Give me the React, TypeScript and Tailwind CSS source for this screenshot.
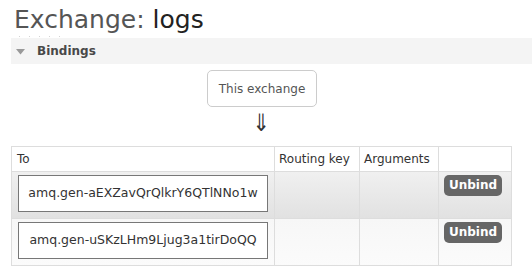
import React from 'react'

const bindings = [
  { to: 'amq.gen-aEXZavQrQlkrY6QTlNNo1w', alt: 'bg-linear-to-b from-[#f0f0f0] to-[#e1e1e1]' },
  { to: 'amq.gen-uSKzLHm9Ljug3a1tirDoQQ', alt: 'bg-linear-to-b from-[#f7f7f7] to-[#fbfbfb]' },
]

export default function App() {
  return (
    <div className="w-[532px] h-[273px] overflow-hidden bg-white pl-[11px] font-['DejaVu_Sans',Verdana,sans-serif] text-[#444]">
      <h1 className="pl-[3px] pt-[5px] h-[36px] text-[25px] leading-[30px] text-[#555] whitespace-nowrap">
        Exchange: <span className="text-[#222]">logs</span>
      </h1>

      <div className="flex gap-[9px] pl-[8px] h-[2px] items-start">
        <span className="w-[1px] h-[1px] bg-[#d4d4d4]"></span>
        <span className="w-[1px] h-[1px] bg-[#d4d4d4]"></span>
        <span className="w-[1px] h-[1px] bg-[#d4d4d4]"></span>
        <span className="w-[1px] h-[1px] bg-[#d4d4d4]"></span>
        <span className="w-[1px] h-[1px] bg-[#d4d4d4]"></span>
      </div>

      <div className="flex items-center h-[26px] bg-[#f4f4f4] pl-[5px] text-[12px] font-bold text-[#484848]">
        <svg width="9" height="6" viewBox="0 0 9 6" className="mr-[12px] mt-[1px]">
          <path d="M0 0 H9 L4.5 5.5 Z" fill="#999" />
        </svg>
        Bindings
      </div>

      <div className="w-[501px] flex flex-col items-center pt-[6px]">
        <div className="w-[110px] h-[37px] ml-[1px] flex items-center justify-center border border-[#ccc] rounded-[5px] text-[12px] text-[#555]">
          This exchange
        </div>
        <div className="h-[39px] pt-[2px] text-[24px] leading-[28px] text-[#333] scale-x-[0.85]">⇓</div>
      </div>

      <table className="w-[501px] border-collapse border border-[#ddd] text-[12px] text-[#333]">
        <thead>
          <tr className="bg-white">
            <th className="w-[263px] h-[25px] border border-[#ddd] px-[5px] text-left font-normal">To</th>
            <th className="w-[85px] h-[25px] border border-[#ddd] px-[4px] text-left font-normal">Routing key</th>
            <th className="w-[79px] h-[25px] border border-[#ddd] px-[4px] text-left font-normal">Arguments</th>
            <th className="h-[25px] border border-[#ddd]"></th>
          </tr>
        </thead>
        <tbody>
          {bindings.map((b) => (
            <tr key={b.to} className={b.alt}>
              <td className="h-[47px] border border-[#ddd] pl-[6px] pr-[5px] pt-[3px] pb-[6px] align-top">
                <div className="w-[250px] h-[37px] flex items-center justify-center border border-[#777] bg-white text-[12.5px] text-[#333] whitespace-nowrap">
                  {b.to}
                </div>
              </td>
              <td className="border border-[#ddd]"></td>
              <td className="border border-[#ddd]"></td>
              <td className="border border-[#ddd] pl-[5px] pt-[3px] align-top">
                <button className="w-[58px] h-[21px] rounded-[5px] bg-[#666] text-white text-[12px] font-bold leading-[21px]">
                  Unbind
                </button>
              </td>
            </tr>
          ))}
        </tbody>
      </table>
    </div>
  )
}
